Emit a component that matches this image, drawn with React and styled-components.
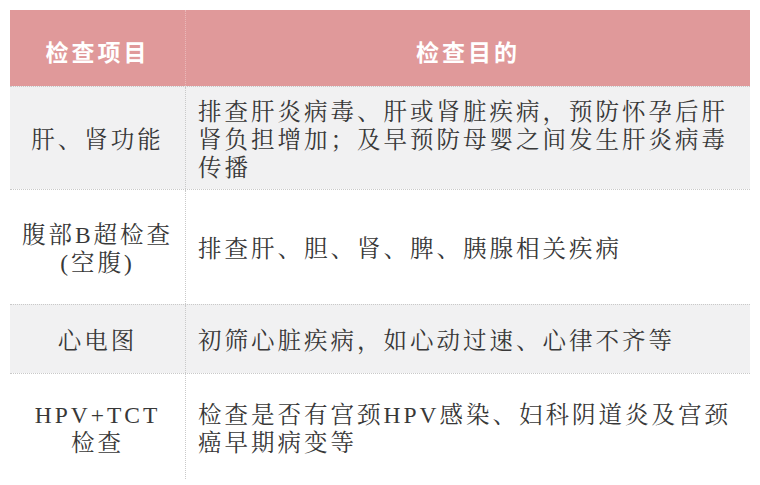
import React from "react";
import styled, { createGlobalStyle } from "styled-components";

const rows = [
  { item: ["肝、肾功能"], aim: "排查肝炎病毒、肝或肾脏疾病，预防怀孕后肝肾负担增加；及早预防母婴之间发生肝炎病毒传播", height: 103, shade: true },
  { item: ["腹部B超检查", "(空腹)"], aim: "排查肝、胆、肾、脾、胰腺相关疾病", height: 115, shade: false },
  { item: ["心电图"], aim: "初筛心脏疾病，如心动过速、心律不齐等", height: 69, shade: true },
  { item: ["HPV+TCT", "检查"], aim: "检查是否有宫颈HPV感染、妇科阴道炎及宫颈癌早期病变等", height: 106, shade: false },
];

const App = () => {
  return (
    <Page>
      <GlobalStyle />
      <Table>
        <Header>
          <HeadCell>检查项目</HeadCell>
          <HeadCell $divider>检查目的</HeadCell>
        </Header>
        {rows.map((row) => (
          <Row key={row.item.join("")} $shade={row.shade} style={{ height: row.height }}>
            <ItemCell>
              {row.item.map((line) => (
                <ItemLine key={line}>{line}</ItemLine>
              ))}
            </ItemCell>
            <AimCell>{row.aim}</AimCell>
          </Row>
        ))}
      </Table>
    </Page>
  );
};

const GlobalStyle = createGlobalStyle`
  body {
    margin: 0;
    background: #ffffff;
  }
`;

const Page = styled.div`
  width: 760px;
  height: 485px;
  padding: 10px 10px 0 10px;
  box-sizing: border-box;
  overflow: hidden;
  background: #ffffff;
`;

const Table = styled.div`
  width: 740px;
  display: flex;
  flex-direction: column;
`;

const Header = styled.div`
  display: grid;
  grid-template-columns: 175px 1fr;
  height: 76px;
  background: #e0999a;
`;

const HeadCell = styled.div`
  display: flex;
  align-items: center;
  justify-content: center;
  padding-top: 6px;
  box-sizing: border-box;
  color: #ffffff;
  font-family: "Noto Sans CJK SC", sans-serif;
  font-weight: 700;
  font-size: 23px;
  letter-spacing: 3px;
  border-left: ${(p) => (p.$divider ? "1px dotted #eab9b9" : "none")};
`;

const Row = styled.div`
  display: grid;
  grid-template-columns: 175px 1fr;
  background: ${(p) => (p.$shade ? "#f1f1f2" : "#ffffff")};
  border-top: 1px dotted #c9c9c9;
  box-sizing: border-box;
  font-family: "Liberation Serif", "Noto Serif CJK SC", "Noto Sans CJK SC", serif;
  color: #383838;
  font-size: 23.5px;
  line-height: 28px;
  letter-spacing: 3px;
`;

const ItemCell = styled.div`
  display: flex;
  flex-direction: column;
  align-items: center;
  justify-content: center;
  text-align: center;
  padding: 4px 4px 0;
  box-sizing: border-box;
`;

const ItemLine = styled.div`
  white-space: nowrap;
`;

const AimCell = styled.div`
  display: flex;
  align-items: center;
  padding: 4px 18px 0 12px;
  box-sizing: border-box;
  border-left: 1px dotted #c9c9c9;
`;

export default App;
